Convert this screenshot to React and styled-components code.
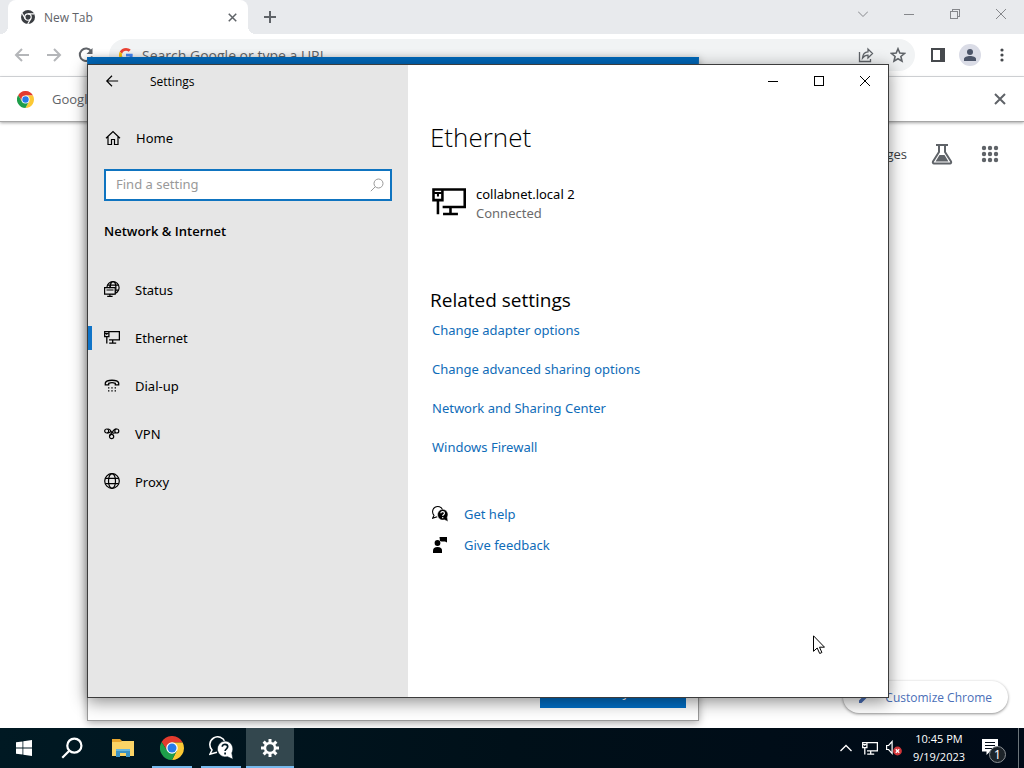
import styled, { createGlobalStyle, css } from 'styled-components';

const GlobalStyle = createGlobalStyle`
  * {
    box-sizing: border-box;
  }

  body {
    margin: 0;
    overflow: hidden;
    font-family: 'Noto Sans', 'Open Sans', sans-serif;
    font-size: 13px;
    color: #000;
  }

  button,
  input {
    font: inherit;
    color: inherit;
  }

  button {
    padding: 0;
    border: 0;
    background: none;
  }

  a {
    text-decoration: none;
  }

  svg {
    display: block;
    flex-shrink: 0;
  }
`;

const Screen = styled.div`
  display: flex;
  flex-direction: column;
  height: 100vh;
`;

const Desktop = styled.div`
  position: relative;
  flex: 1;
  min-height: 0;
  overflow: hidden;
`;

/* Browser */

const Browser = styled.div`
  display: flex;
  flex-direction: column;
  height: 100%;
  background: #fff;
  color: #5f6368;
  font-family: 'Open Sans', 'Noto Sans', sans-serif;
`;

const TabStrip = styled.div`
  display: flex;
  height: 34px;
  padding-left: 8px;
  background: #e8eaed;
`;

const Tab = styled.div`
  position: relative;
  display: flex;
  align-items: center;
  width: 240px;
  padding: 0 8px 0 13px;
  border-radius: 8px 8px 0 0;
  background: #fff;
  font-size: 12px;

  &::before,
  &::after {
    content: '';
    position: absolute;
    bottom: 0;
    width: 8px;
    height: 8px;
  }

  &::before {
    right: 100%;
    background: radial-gradient(circle at 0 0, transparent 8px, #fff 8px);
  }

  &::after {
    left: 100%;
    background: radial-gradient(circle at 100% 0, transparent 8px, #fff 8px);
  }
`;

const TabTitle = styled.span`
  flex: 1;
  margin-left: 9px;
`;

const IconButton = styled.button`
  display: grid;
  place-items: center;
  width: ${props => props.$width || 32}px;
  height: ${props => props.$height || 32}px;
  flex-shrink: 0;
  color: ${props => props.$color || 'inherit'};
`;

const WindowButtons = styled.div`
  display: flex;
  margin-left: auto;
  color: ${props => (props.$active ? '#000' : '#85878b')};
`;

const Toolbar = styled.div`
  display: flex;
  align-items: center;
  height: 43px;
  padding: 0 6px;
  border-bottom: 1px solid #dadce0;
`;

const Omnibox = styled.div`
  display: flex;
  align-items: center;
  flex: 1;
  height: 32px;
  margin: 0 7px;
  padding: 0 1px 0 10px;
  border-radius: 16px;
  background: #f1f3f4;
`;

const OmniboxInput = styled.input`
  flex: 1;
  min-width: 0;
  margin-left: 9px;
  padding: 0;
  border: 0;
  outline: 0;
  background: none;
  font-size: 14px;

  &::placeholder {
    color: #5f6368;
    opacity: 1;
  }
`;

const Avatar = styled.span`
  display: grid;
  place-items: center;
  width: 22px;
  height: 22px;
  border-radius: 50%;
  background: #dadce6;
`;

const InfoBar = styled.div`
  display: flex;
  align-items: center;
  justify-content: space-between;
  height: 45px;
  padding: 0 8px 0 17px;
  border-bottom: 1px solid #a6a6a6;
  box-shadow: 0 1px 3px rgba(0, 0, 0, 0.35);
`;

const InfoMessage = styled.div`
  display: flex;
  align-items: center;
  gap: 18px;
`;

const Page = styled.main`
  display: flex;
  flex: 1;
  flex-direction: column;
  align-items: flex-end;
  justify-content: space-between;
  padding: 16px 16px 15px 0;
`;

const PageLinks = styled.nav`
  display: flex;
  align-items: center;
  padding-right: 2px;
`;

const ImagesLink = styled.a`
  margin-right: 19px;
  color: #3c4043;
`;

const AppsButton = styled(IconButton)`
  margin-left: 16px;
`;

const CustomizeButton = styled.button`
  display: flex;
  align-items: center;
  gap: 14px;
  height: 32px;
  padding: 0 16px;
  border-radius: 16px;
  background: #fff;
  box-shadow: 0 1px 3px rgba(0, 0, 0, 0.45);
  color: #4a6fb8;
  font-size: 12px;
`;

/* Windows on the desktop */

const HelpWindow = styled.div`
  position: absolute;
  inset: 57px 325px 7px 87px;
  display: flex;
  align-items: flex-end;
  justify-content: flex-end;
  padding: 12px;
  border: 1px solid #999;
  border-top: 30px solid #0067b8;
  background: #fff;
  box-shadow: 0 2px 8px rgba(0, 0, 0, 0.35);
`;

const HelpButton = styled.button`
  width: 146px;
  height: 32px;
  background: #0070c8;
  color: #fff;
`;

const SettingsWindow = styled.section`
  position: absolute;
  inset: 64px 135px 30px 87px;
  display: flex;
  border: 1px solid #3c3c3c;
  background: #fff;
  box-shadow: 0 4px 16px rgba(0, 0, 0, 0.45);
`;

const Sidebar = styled.aside`
  width: 320px;
  flex-shrink: 0;
  background: #e6e6e6;
`;

const TitleBar = styled.header`
  display: flex;
  align-items: center;
  height: 32px;
  font-family: 'Open Sans', 'Noto Sans', sans-serif;
  font-size: 12px;
`;

const WindowTitle = styled.span`
  margin-left: 14px;
`;

const HomeLink = styled.a`
  display: flex;
  align-items: center;
  gap: 15px;
  height: 48px;
  margin-top: 17px;
  padding-left: 17px;
  color: #000;
`;

const SearchBox = styled.label`
  display: flex;
  align-items: center;
  height: 32px;
  margin: 7px 16px 0;
  padding: 0 6px 0 10px;
  border: 2px solid #0f74c0;
  background: #fff;
  color: #999;
`;

const SearchInput = styled.input`
  flex: 1;
  min-width: 0;
  padding: 0 0 2px;
  border: 0;
  outline: 0;
  background: none;

  &::placeholder {
    color: #999;
    opacity: 1;
  }
`;

const Category = styled.h2`
  margin: 20px 16px 25px;
  font-family: 'Open Sans', 'Noto Sans', sans-serif;
  font-size: 13px;
  font-weight: 600;
  line-height: 20px;
`;

const NavItem = styled.a`
  display: flex;
  align-items: center;
  gap: 15px;
  height: 48px;
  padding-left: 16px;
  color: #000;

  svg {
    margin-bottom: 2px;
  }

  ${props =>
    props.$active &&
    css`
      padding-left: 0;

      &::before {
        content: '';
        width: 4px;
        height: 24px;
        margin-right: -3px;
        background: #0f74c8;
      }
    `}
`;

const Content = styled.main`
  flex: 1;
  min-width: 0;
`;

const ContentBody = styled.div`
  padding: 20px 22px;
`;

const PageTitle = styled.h1`
  margin: 0;
  font-family: 'Open Sans', 'Noto Sans', sans-serif;
  font-size: 26px;
  font-weight: 300;
  line-height: 40px;
`;

const Connection = styled.div`
  display: flex;
  gap: 10px;
  margin: 28px 0 63px;
  padding-left: 2px;

  svg {
    margin-top: 3px;
  }
`;

const ConnectionText = styled.div`
  line-height: 19px;
`;

const ConnectionStatus = styled.div`
  color: #6b6b6b;
`;

const SectionTitle = styled.h2`
  margin: 0;
  font-family: 'Open Sans', 'Noto Sans', sans-serif;
  font-size: 19px;
  font-weight: 400;
  line-height: 28px;
`;

const RelatedLinks = styled.div`
  display: flex;
  flex-direction: column;
  align-items: flex-start;
  gap: 19px;
  margin-top: 6px;
  padding-left: 2px;
`;

const Link = styled.a`
  display: flex;
  align-items: center;
  gap: 16px;
  line-height: 20px;
  color: #0f6cb8;
`;

const SupportLinks = styled(RelatedLinks)`
  gap: 11px;
  margin-top: 47px;

  svg {
    color: #000;
  }
`;

const Pointer = styled.svg`
  position: absolute;
  top: 635px;
  left: 813px;
`;

/* Taskbar */

const TaskBar = styled.footer`
  display: flex;
  height: 40px;
  background: linear-gradient(90deg, #001923, #001019 50%, #000a17);
  color: #fff;
`;

const Pinned = styled.div`
  display: flex;
  gap: 1px;
  padding-left: 3px;
`;

const TaskButton = styled.button`
  position: relative;
  display: grid;
  place-items: center;
  width: 48px;
  height: 40px;
  background: ${props => (props.$active ? '#33474e' : 'none')};

  ${props =>
    props.$open &&
    css`
      &::after {
        content: '';
        position: absolute;
        bottom: 0;
        left: ${props.$active ? 0 : 4}px;
        right: ${props.$active ? 0 : 4}px;
        height: 2px;
        background: #76b9ed;
      }
    `}
`;

const Tray = styled.div`
  display: flex;
  align-items: center;
  margin-left: auto;
`;

const Clock = styled.time`
  width: 58px;
  margin-left: 4px;
  font-family: 'Open Sans', 'Noto Sans', sans-serif;
  font-size: 11px;
  line-height: 18px;
  text-align: center;
`;

const ActionCenter = styled.button`
  position: relative;
  display: grid;
  place-items: center;
  width: 50px;
  height: 40px;
  padding: 0 6px 2px 0;
`;

const Badge = styled.span`
  position: absolute;
  right: 12px;
  bottom: 5px;
  width: 17px;
  height: 17px;
  border: 1px solid #8a8f94;
  border-radius: 50%;
  background: #1d242a;
  font-size: 12px;
  line-height: 15px;
  text-align: center;
`;

const ShowDesktop = styled.button`
  width: 6px;
  height: 40px;
  border-left: 1px solid #6c757b;
`;

/* Icons */

const Line = ({ size = 16, width = 1, children, ...rest }) => (
  <svg
    width={size}
    height={size}
    viewBox={`0 0 ${size} ${size}`}
    fill="none"
    stroke="currentColor"
    strokeWidth={width}
    aria-hidden="true"
    {...rest}
  >
    {children}
  </svg>
);

const ChromeLogo = ({ size }) => (
  <svg width={size} height={size} viewBox="0 0 48 48" aria-hidden="true">
    <path fill="#e33b2e" d="M24 13H45.3L44.8 12A24 24 0 0 0 3.2 12L14.5 29.5 24 24Z" />
    <path fill="#fcc934" d="M33.5 29.5 24 48A24 24 0 0 0 45.3 13H24L24 24Z" />
    <path fill="#1e9e4a" d="M14.5 29.5 3.2 12A24 24 0 0 0 24 48L33.5 29.5Z" />
    <circle cx="24" cy="24" r="11.5" fill="#fff" />
    <circle cx="24" cy="24" r="9" fill="#267be9" />
  </svg>
);

const ChromeMono = () => (
  <svg width="14" height="14" viewBox="0 0 48 48" aria-hidden="true">
    <circle cx="24" cy="24" r="24" fill="#3a3d41" />
    <circle cx="24" cy="24" r="11" fill="#3a3d41" stroke="#fff" strokeWidth="4" />
    <path d="M24 13h22M14.500 29.500 4 11M33.500 29.500 23 48" stroke="#fff" strokeWidth="4" />
  </svg>
);

const GoogleG = () => (
  <svg width="14" height="14" viewBox="0 0 48 48" aria-hidden="true">
    <path fill="#ea4335" d="M24 9.5c3.5 0 6.700 1.200 9.200 3.600l6.900-6.900C35.900 2.400 30.500 0 24 0 14.600 0 6.500 5.400 2.600 13.200l8 6.200C12.400 13.700 17.700 9.500 24 9.500Z" />
    <path fill="#4285f4" d="M47 24.500c0-1.600-.2-3.100-.4-4.500H24v9h12.900c-.6 3-2.200 5.500-4.700 7.200l7.700 6C44.400 38 47 32 47 24.500Z" />
    <path fill="#fbbc05" d="M10.500 28.600c-1-3-1-6.200 0-9.200l-8-6.200c-3.400 6.700-3.400 14.800 0 21.600Z" />
    <path fill="#34a853" d="M24 48c6.500 0 11.900-2.100 15.900-5.800l-7.700-6c-2.200 1.400-4.900 2.300-8.200 2.300-6.300 0-11.600-4.200-13.500-9.900l-8 6.200C6.500 42.600 14.600 48 24 48Z" />
  </svg>
);

const ArrowLeft = ({ width = 2, size = 16 }) => (
  <Line size={size} viewBox="0 0 16 16" width={width}>
    <path d="M15 8H2M8 2 2 8l6 6" />
  </Line>
);

const ArrowRight = () => (
  <Line width={2}>
    <path d="M1 8h13M8 2l6 6-6 6" />
  </Line>
);

const Reload = () => (
  <Line width={2}>
    <path d="M13.300 4.500A6.200 6.200 0 1 0 14 9.500" />
    <path d="M14.500 1v6h-6Z" fill="currentColor" stroke="none" />
  </Line>
);

const Cross = ({ size = 12, width = 1 }) => (
  <Line size={size} viewBox="0 0 12 12" width={width}>
    <path d="m1 1 10 10M11 1 1 11" />
  </Line>
);

const Plus = () => (
  <Line size={12} width={2}>
    <path d="M6 0v12M0 6h12" />
  </Line>
);

const Dash = () => (
  <Line size={10} shapeRendering="crispEdges">
    <path d="M0 5.500h10" />
  </Line>
);

const Maximize = () => (
  <Line size={10} shapeRendering="crispEdges">
    <path d="M.5.500h9v9h-9Z" />
  </Line>
);

const Restore = () => (
  <Line size={10} shapeRendering="crispEdges">
    <path d="M.5 2.500h7v7h-7ZM2.500 2V.500h7v7H8" />
  </Line>
);

const ChevronDown = () => (
  <Line size={10}>
    <path d="m0 2.500 5 5 5-5" />
  </Line>
);

const Share = () => (
  <Line width={1.3}>
    <path d="M1.500 5v9.500h11V12" />
    <path d="M10 2v2.800C6.500 5 4.800 7.500 4.500 11c1.500-2 3-2.800 5.500-2.800V11l4.500-4.500Z" />
  </Line>
);

const Star = () => (
  <Line width={1.6}>
    <path d="m8 1.800 1.800 4.300 4.600.4-3.500 3 1.100 4.600L8 11.700l-4 2.400 1.100-4.600-3.500-3 4.600-.4Z" />
  </Line>
);

const SidePanel = () => (
  <svg width="14" height="14" viewBox="0 0 14 14" fill="#46494d" aria-hidden="true">
    <path fillRule="evenodd" d="M0 0h14v14H0Zm2 2v10h7V2Z" />
  </svg>
);

const Person = () => (
  <svg width="12" height="12" viewBox="0 0 12 12" fill="#4b5468" aria-hidden="true">
    <circle cx="6" cy="3" r="3" />
    <path d="M0 12V10c0-2 3-3 6-3s6 1 6 3v2Z" />
  </svg>
);

const Dots = () => (
  <svg width="4" height="14" viewBox="0 0 4 14" fill="#46494d" aria-hidden="true">
    {[2, 7, 12].map(y => (
      <circle key={y} cx="2" cy={y} r="1.600" />
    ))}
  </svg>
);

const Flask = () => (
  <Line size={22} width={2}>
    <path d="M5 2h12M8 2v7l-6 9.500c-.5 1 0 2 1 2h16c1 0 1.500-1 1-2L14 9V2" />
    <path d="M8.500 12h5l4 6.500h-13Z" fill="currentColor" stroke="none" />
  </Line>
);

const AppsGrid = () => (
  <svg width="18" height="18" viewBox="0 0 18 18" fill="currentColor" aria-hidden="true">
    {[3, 9, 15].map(y => [3, 9, 15].map(x => <circle key={`${x}-${y}`} cx={x} cy={y} r="2.200" />))}
  </svg>
);

const Pencil = () => (
  <svg width="12" height="12" viewBox="0 0 12 12" fill="currentColor" aria-hidden="true">
    <path d="M0 9.500V12h2.500L9 5.500 6.500 3ZM7.500 2 10 4.500l1.500-1.500L9 .5Z" />
  </svg>
);

const Home = () => (
  <Line width={1.2}>
    <path d="M1 8.300 8 1.500l7 6.800M3 6.800v7.700h3.500V9.500h3v5H13V6.800" />
  </Line>
);

const Magnifier = ({ size = 14, width = 1 }) => (
  <Line size={size} viewBox="0 0 14 14" width={width}>
    <circle cx="8.500" cy="5.500" r="4.500" />
    <path d="M5.300 8.700.8 13.200" />
  </Line>
);

const Status = () => (
  <Line width={1.2}>
    <circle cx="9" cy="6.700" r="6.100" />
    <ellipse cx="9" cy="6.700" rx="2.900" ry="6.100" />
    <path d="M3.500 4.200h11M3.500 9.200h11" />
    <path d="M.6 6.700h10.600v6.400H.6Z" fill="#e6e6e6" />
    <path d="M6.200 6.700h-.2c0-1 .2-2 .5-2.500M5.900 13v2.400M3.200 15.400h5.400M2.500 9h7" />
  </Line>
);

const EthernetIcon = ({ size = 16, width = 1.3 }) => (
  <svg
    width={size}
    height={size * 0.8125}
    viewBox="0 0 16 13"
    fill="none"
    stroke="currentColor"
    strokeWidth={width}
    aria-hidden="true"
  >
    <path d="M5 8.900h10.400V.7H.7v5h4.200v-5M2.800 5.700v6.700M8.700 8.900v3.300M5.200 12.200h7" />
    <path d="M1 2.400h3.600M2.800 2.400v1.600" strokeWidth={width * 0.8} />
  </svg>
);

const DialUp = () => (
  <Line width={1.3}>
    <path d="M1.300 7.800V6C2.500 2.300 13.500 2.300 14.700 6v1.800h-3.400V6.300c-2-.8-4.600-.8-6.600 0v1.500Z" />
    <path d="M4 10.800h1.400M7.300 10.800h1.400M10.600 10.800h1.400M4 13.900h1.400M7.300 13.900h1.400M10.600 13.900h1.400" />
  </Line>
);

const Vpn = () => (
  <Line width={1.2}>
    <circle cx="2.700" cy="6" r="2" />
    <circle cx="12.800" cy="6" r="2" />
    <circle cx="7.600" cy="11.500" r="2.100" />
    <path d="M3.500 4.200c2-.8 2.800.6 3.500 2.100s2.300 2.400 4.400 1.400M12.500 4c-2.500-.4-3 1.500-4 3S5.800 9.300 5.600 11M3.500 7.900c1.500.2 2.700-.4 3.500-1.800" />
  </Line>
);

const Globe = () => (
  <Line width={1.2}>
    <circle cx="8" cy="8" r="7.300" />
    <ellipse cx="8" cy="8" rx="3.500" ry="7.300" />
    <path d="M1.300 5.300h13.400M1.300 10.700h13.400" />
  </Line>
);

const HelpBubbles = ({ size = 16, mark = '#fff' }) => (
  <svg width={size} height={size} viewBox="0 0 24 24" aria-hidden="true">
    <path
      d="M8 16.200 1 18.200 3 14A7.800 7.800 0 1 1 16 6"
      fill="none"
      stroke="currentColor"
      strokeWidth="1.600"
    />
    <path
      d="M16 5a8 8 0 0 1 6.800 12L24 23.300l-5.500-2.600A8 8 0 1 1 16 5Z"
      fill="currentColor"
      stroke={mark}
      strokeWidth=".6"
    />
    <path d="M13.300 10.800c0-3.300 5.400-3.200 5.400 0 0 2-2.600 2-2.600 4.200M16.100 16.500v1.900" fill="none" stroke={mark} strokeWidth="1.700" />
  </svg>
);

const Feedback = () => (
  <svg width="16" height="16" viewBox="0 0 16 16" fill="currentColor" aria-hidden="true">
    <path d="M7.500 0H15v5.500L13 4.500H9.500L8 4Z" />
    <circle cx="5.500" cy="6" r="2.900" />
    <path d="M1 16v-2.500c0-2 1.500-3.500 4.500-3.500s4.500 1.500 4.500 3.500V16Z" />
  </svg>
);

const WindowsLogo = () => (
  <svg width="16" height="16" viewBox="0 0 16 16" fill="#fff" aria-hidden="true">
    <path d="M0 2.300 6.500 1.400V7.500H0ZM7.300 1.300 16 0v7.500H7.300ZM0 8.400h6.500v6.200L0 13.700ZM7.300 8.400H16V16l-8.700-1.300Z" />
  </svg>
);

const Folder = () => (
  <svg width="22" height="20" viewBox="0 0 22 20" aria-hidden="true">
    <path fill="#e9a72f" d="M0 1h8l2 2h12v5H0Z" />
    <path fill="#fbd466" d="M0 4h9l1-1h12v15H0Z" />
    <path fill="#3b92c4" d="M4 19v-8h14v8h-4v-4H8v4Z" />
    <path fill="#67b6dd" d="M4 11h14v2H4Z" />
  </svg>
);

const Gear = () => (
  <svg width="18" height="18" viewBox="0 0 18 18" fill="none" stroke="#fff" aria-hidden="true">
    <circle cx="9" cy="9" r="5" strokeWidth="2.400" />
    {[0, 45, 90, 135, 180, 225, 270, 315].map(angle => (
      <path key={angle} d="M9 0v3.500" strokeWidth="3" transform={`rotate(${angle} 9 9)`} />
    ))}
  </svg>
);

const ChevronUp = () => (
  <Line size={12} width={1.3}>
    <path d="m.5 9 5.500-5.500L11.500 9" />
  </Line>
);

const Muted = () => (
  <svg width="16" height="16" viewBox="0 0 16 16" aria-hidden="true">
    <path d="M.6 5.500h2l3.500-4v12l-3.500-4h-2Z" fill="none" stroke="#fff" strokeWidth="1.200" />
    <circle cx="11.500" cy="11" r="4.400" fill="#d13438" />
    <path d="m9.800 9.300 3.400 3.400M13.200 9.300l-3.400 3.400" stroke="#fff" strokeWidth="1.300" />
  </svg>
);

const Notification = () => (
  <svg width="16" height="16" viewBox="0 0 16 16" aria-hidden="true">
    <path fill="#fff" d="M0 0h16v12.500H8L4.500 16v-3.500H0Z" />
    <path d="M3 3.500h10M3 6.500h10M3 9.500h7" stroke="#000a17" />
  </svg>
);

const navItems = [
  { name: 'Status', icon: <Status /> },
  { name: 'Ethernet', icon: <EthernetIcon />, active: true },
  { name: 'Dial-up', icon: <DialUp /> },
  { name: 'VPN', icon: <Vpn /> },
  { name: 'Proxy', icon: <Globe /> },
];

const relatedLinks = [
  'Change adapter options',
  'Change advanced sharing options',
  'Network and Sharing Center',
  'Windows Firewall',
];

const supportLinks = [
  { name: 'Get help', icon: <HelpBubbles /> },
  { name: 'Give feedback', icon: <Feedback /> },
];

const taskButtons = [
  { name: 'File Explorer', icon: <Folder /> },
  { name: 'Google Chrome', icon: <ChromeLogo size={24} />, open: true },
  { name: 'Get Help', icon: <HelpBubbles size={24} mark="#001923" />, open: true },
  { name: 'Settings', icon: <Gear />, open: true, active: true },
];

const BrowserWindow = () => (
  <Browser>
    <TabStrip>
      <Tab>
        <ChromeMono />
        <TabTitle>New Tab</TabTitle>
        <IconButton $width={16} $height={16} aria-label="Close tab">
          <Cross size={9} width={2} />
        </IconButton>
      </Tab>
      <IconButton $width={44} $height={34} aria-label="New tab">
        <Plus />
      </IconButton>
      <WindowButtons>
        <IconButton $width={46} $height={28} aria-label="Search tabs">
          <ChevronDown />
        </IconButton>
        <IconButton $width={46} $height={28} aria-label="Minimize">
          <Dash />
        </IconButton>
        <IconButton $width={46} $height={28} aria-label="Restore">
          <Restore />
        </IconButton>
        <IconButton $width={46} $height={28} aria-label="Close">
          <Cross />
        </IconButton>
      </WindowButtons>
    </TabStrip>
    <Toolbar>
      <IconButton $color="#b4b6b9" aria-label="Back">
        <ArrowLeft />
      </IconButton>
      <IconButton $color="#b4b6b9" aria-label="Forward">
        <ArrowRight />
      </IconButton>
      <IconButton aria-label="Reload">
        <Reload />
      </IconButton>
      <Omnibox>
        <GoogleG />
        <OmniboxInput placeholder="Search Google or type a URL" aria-label="Address and search bar" />
        <IconButton aria-label="Share">
          <Share />
        </IconButton>
        <IconButton aria-label="Bookmark">
          <Star />
        </IconButton>
      </Omnibox>
      <IconButton aria-label="Side panel">
        <SidePanel />
      </IconButton>
      <IconButton aria-label="Profile">
        <Avatar>
          <Person />
        </Avatar>
      </IconButton>
      <IconButton aria-label="Menu">
        <Dots />
      </IconButton>
    </Toolbar>
    <InfoBar>
      <InfoMessage>
        <ChromeLogo size={17} />
        Google Chrome
      </InfoMessage>
      <IconButton aria-label="Dismiss">
        <Cross width={2} />
      </IconButton>
    </InfoBar>
    <Page>
      <PageLinks>
        <ImagesLink href="#images">Images</ImagesLink>
        <IconButton aria-label="Labs">
          <Flask />
        </IconButton>
        <AppsButton aria-label="Google apps">
          <AppsGrid />
        </AppsButton>
      </PageLinks>
      <CustomizeButton>
        <Pencil />
        Customize Chrome
      </CustomizeButton>
    </Page>
  </Browser>
);

const Settings = () => (
  <SettingsWindow>
    <Sidebar>
      <TitleBar>
        <IconButton $width={48} aria-label="Back">
          <ArrowLeft size={14} width={1.3} />
        </IconButton>
        <WindowTitle>Settings</WindowTitle>
      </TitleBar>
      <HomeLink href="#home">
        <Home />
        Home
      </HomeLink>
      <SearchBox>
        <SearchInput placeholder="Find a setting" aria-label="Find a setting" />
        <Magnifier />
      </SearchBox>
      <Category>Network &amp; Internet</Category>
      <nav>
        {navItems.map(item => (
          <NavItem key={item.name} href={`#${item.name}`} $active={item.active}>
            {item.icon}
            {item.name}
          </NavItem>
        ))}
      </nav>
    </Sidebar>
    <Content>
      <TitleBar>
        <WindowButtons $active>
          <IconButton $width={46} aria-label="Minimize">
            <Dash />
          </IconButton>
          <IconButton $width={46} aria-label="Maximize">
            <Maximize />
          </IconButton>
          <IconButton $width={46} aria-label="Close">
            <Cross />
          </IconButton>
        </WindowButtons>
      </TitleBar>
      <ContentBody>
        <PageTitle>Ethernet</PageTitle>
        <Connection>
          <EthernetIcon size={34} width={1.2} />
          <ConnectionText>
            <div>collabnet.local 2</div>
            <ConnectionStatus>Connected</ConnectionStatus>
          </ConnectionText>
        </Connection>
        <SectionTitle>Related settings</SectionTitle>
        <RelatedLinks>
          {relatedLinks.map(name => (
            <Link key={name} href="#related">
              {name}
            </Link>
          ))}
        </RelatedLinks>
        <SupportLinks>
          {supportLinks.map(link => (
            <Link key={link.name} href="#support">
              {link.icon}
              {link.name}
            </Link>
          ))}
        </SupportLinks>
      </ContentBody>
    </Content>
  </SettingsWindow>
);

const App = () => (
  <Screen>
    <GlobalStyle />
    <Desktop>
      <BrowserWindow />
      <HelpWindow>
        <HelpButton>Retry</HelpButton>
      </HelpWindow>
      <Settings />
      <Pointer width="12" height="19" viewBox="0 0 12 19" aria-hidden="true">
        <path d="M.5.800v15.500L4.200 13l2.500 5.500 2.200-1L6.500 12.200h5Z" fill="#fff" stroke="#000" />
      </Pointer>
    </Desktop>
    <TaskBar>
      <IconButton $width={48} $height={40} aria-label="Start">
        <WindowsLogo />
      </IconButton>
      <IconButton $width={48} $height={40} aria-label="Search">
        <Magnifier size={22} width={1.4} />
      </IconButton>
      <Pinned>
        {taskButtons.map(item => (
          <TaskButton key={item.name} aria-label={item.name} $open={item.open} $active={item.active}>
            {item.icon}
          </TaskButton>
        ))}
      </Pinned>
      <Tray>
        <IconButton $width={24} aria-label="Show hidden icons">
          <ChevronUp />
        </IconButton>
        <IconButton $width={24} aria-label="Network">
          <EthernetIcon />
        </IconButton>
        <IconButton $width={24} aria-label="Volume">
          <Muted />
        </IconButton>
        <Clock>
          10:45 PM
          <br />
          9/19/2023
        </Clock>
        <ActionCenter aria-label="Notifications">
          <Notification />
          <Badge>1</Badge>
        </ActionCenter>
        <ShowDesktop aria-label="Show desktop" />
      </Tray>
    </TaskBar>
  </Screen>
);

export default App;
